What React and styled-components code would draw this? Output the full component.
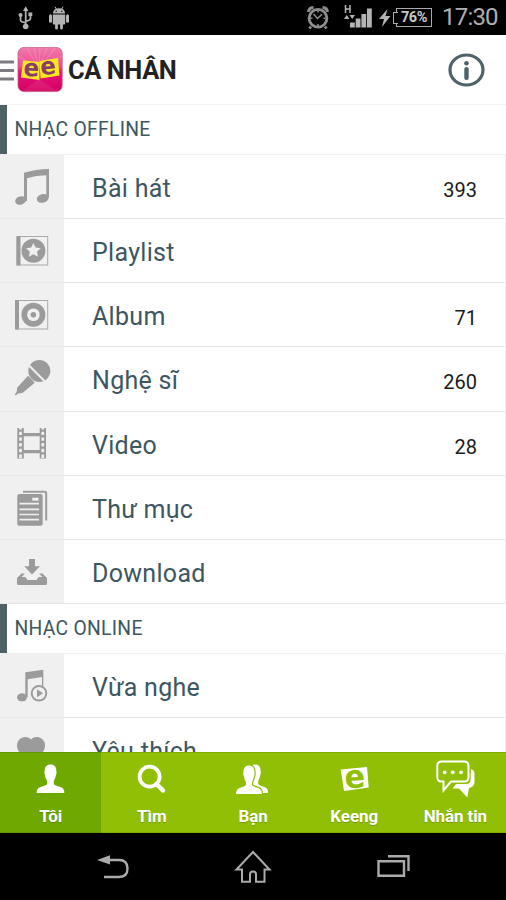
import React from "react";
import styled, { createGlobalStyle } from "styled-components";

const GlobalStyle = createGlobalStyle`
    * {
        box-sizing: border-box;
    }
    body {
        margin: 0;
        background: #fff;
        font-family: Roboto, "Noto Sans", sans-serif;
    }
    svg {
        display: block;
        flex: none;
    }
`;

const Screen = styled.div`
    display: flex;
    flex-direction: column;
    width: 506px;
    height: 900px;
    overflow: hidden;
    background: #fff;
`;

const StatusBar = styled.div`
    flex: none;
    display: flex;
    justify-content: space-between;
    height: 35px;
    padding: 0 8px 0 17px;
    background: #000;
    color: #b4b4b4;
`;

const StatusGroup = styled.div`
    display: flex;
    align-items: center;
    height: 35px;
`;

const Battery = styled.div`
    position: relative;
    width: 36px;
    height: 19px;
    margin-left: 5px;
    border: 1.5px solid #aaa;
    font-size: 14.5px;
    font-weight: 700;
    line-height: 18px;
    text-align: center;
    letter-spacing: -0.4px;
    color: #c8c8c8;
    &::before {
        content: "";
        position: absolute;
        left: -4px;
        top: 3px;
        width: 4px;
        height: 10px;
        border: 1px solid #aaa;
        border-right: 0;
        background: #000;
    }
`;

const Clock = styled.span`
    width: 56px;
    margin-left: 10px;
    font-size: 24px;
    line-height: 37px;
    letter-spacing: -0.8px;
    white-space: nowrap;
    color: #b0b0b0;
`;

const Header = styled.header`
    flex: none;
    display: flex;
    align-items: center;
    height: 70px;
    padding-right: 20px;
    border-bottom: 1px solid #f3f3f3;
`;

const Title = styled.h1`
    flex: 1;
    margin: 0 0 0 5px;
    font-size: 25.5px;
    font-weight: 700;
    line-height: 70px;
    letter-spacing: -0.45px;
    color: #222;
`;

const Content = styled.main`
    flex: 1;
    min-height: 0;
    overflow: hidden;
`;

const SectionTitle = styled.h2`
    height: ${(props) => props.$height}px;
    margin: 0;
    padding-left: 7.5px;
    border-left: 7px solid #4d6167;
    font-size: 19.3px;
    font-weight: 400;
    line-height: 50px;
    letter-spacing: 0.3px;
    color: #3d565f;
`;

const List = styled.div`
    border-right: 1px solid #ededed;
    border-top: 1px solid #f0f0f0;
`;

const Row = styled.div`
    display: flex;
    height: 64.15px;
    border-bottom: 1px solid #e8e8e8;
`;

const IconCell = styled.div`
    flex: none;
    width: 64px;
    background: #f0f0f0;
    overflow: hidden;
    color: #9b9b9b;
`;

const Label = styled.span`
    flex: 1;
    padding-left: 28px;
    font-size: 25px;
    line-height: 68px;
    letter-spacing: 0.3px;
    color: #3d565f;
`;

const Count = styled.span`
    padding-right: 28px;
    font-size: 20px;
    line-height: 70px;
    color: #1a1a1a;
`;

const TabBar = styled.nav`
    flex: none;
    display: grid;
    grid-template-columns: repeat(5, 1fr);
    height: 81px;
    background: #91bf06;
`;

const Tab = styled.div`
    display: flex;
    flex-direction: column;
    align-items: center;
    border-top: 1px solid ${(props) => (props.$active ? "#5f9700" : "#82ad05")};
    border-bottom: 1px solid ${(props) => (props.$active ? "#5f9700" : "#82ad05")};
    background: ${(props) => (props.$active ? "#6fa800" : "#91bf06")};
    color: #fff;
`;

const TabLabel = styled.span`
    font-size: 17px;
    font-weight: 700;
    line-height: 20px;
    letter-spacing: -0.1px;
    text-shadow: 0 1px 1px rgba(0, 0, 0, 0.2);
    white-space: nowrap;
`;

const NavBar = styled.nav`
    flex: none;
    display: flex;
    justify-content: center;
    height: 67px;
    background: #000;
    color: #ababab;
`;

const Icon = ({ w = 64, h = 64, children }) => (
    <svg width={w} height={h} viewBox={`0 0 ${w} ${h}`} fill="currentColor">
        {children}
    </svg>
);

const NoteIcon = () => (
    <Icon>
        <path d="M24 17.8Q36 14 49 14V42.500H46.300V20.300Q36 20.300 27 23.300V46H24Z" />
        <ellipse cx="20.600" cy="45.500" rx="5.500" ry="4.200" transform="rotate(-15 20.600 45.500)" />
        <ellipse cx="42.700" cy="43.400" rx="6" ry="4.300" transform="rotate(-15 42.700 43.400)" />
    </Icon>
);

const Cover = ({ x = 16.5, children }) => (
    <Icon>
        <rect x={x} y="17.500" width={47.7 - x} height="28.500" fill="none" stroke="#aaa" />
        <rect x={x - 0.5} y="17" width="4" height="29.500" rx="1" />
        <circle cx="33.400" cy="31.700" r="12" />
        {children}
    </Icon>
);

const PlaylistIcon = () => (
    <Cover x={17}>
        <path
            fill="#f0f0f0"
            d="M33.400 24L35.600 28.600 40.700 29.200 37 32.700 37.900 37.700 33.400 35.300 28.900 37.700 29.800 32.700 26.100 29.200 31.200 28.600Z"
        />
    </Cover>
);

const AlbumIcon = () => (
    <Cover x={15.5}>
        <circle cx="33.400" cy="31.700" r="6.300" fill="#f0f0f0" />
        <circle cx="33.400" cy="31.700" r="2.800" />
    </Cover>
);

const MicIcon = () => (
    <Icon>
        <circle cx="39.300" cy="24" r="11" />
        <path d="M28 28.700L34.700 35.700 22.500 46 18 46.500 15.800 48.500 14.800 47.500 16.700 44.700 17.300 40.500Z" />
        <path d="M28.500 18L45 34.500" stroke="#f0f0f0" strokeWidth="2" />
    </Icon>
);

const FilmIcon = () => (
    <Icon>
        <path d="M17.300 16H23.800V46.500H17.300ZM39.700 16H46V46.500H39.700Z" />
        <path d="M23 21H40V24.300H23ZM23 38H40V41.300H23Z" />
        {[20.5, 42.8].map((x) => (
            <path key={x} d={`M${x} 15V48`} stroke="#f0f0f0" strokeWidth="2.700" strokeDasharray="3.400 2.300" strokeDashoffset="1" />
        ))}
    </Icon>
);

const FolderIcon = () => (
    <Icon>
        <path d="M23 15.700H44.500Q46.200 15.700 46.200 17.500V44.500" fill="none" stroke="currentColor" strokeWidth="2" />
        <rect x="17.300" y="18" width="25.400" height="31.700" rx="2" />
        <path
            d="M19.500 27.700H39M19.500 33.300H39M19.500 38.500H39M19.500 43.700H39"
            stroke="#f0f0f0"
            strokeWidth="1.700"
        />
        <path d="M32.300 21.700H38.500V24.700H32.300Z" fill="#f0f0f0" />
    </Icon>
);

const DownloadIcon = () => (
    <Icon>
        <path d="M29 19H35V26.300H40L32 34.500 24.300 26.300H29Z" />
        <path d="M21.500 33.500H25L21.500 37H25.500L27.500 40H36.500L38.500 37H42.500L39 33.500H42.500L47 38V43.500Q47 45 45.500 45H18.500Q17 45 17 43.500V38Z" />
    </Icon>
);

const RecentIcon = () => (
    <Icon>
        <path d="M25.300 18.300L43.300 15.700V32H42V23L27.700 25.300V43H25.300Z" />
        <ellipse cx="22" cy="43.300" rx="5" ry="4" />
        <circle cx="39" cy="39.300" r="7.300" fill="#f0f0f0" stroke="currentColor" strokeWidth="2" />
        <path d="M37 35.300L43 39.300 37 43.300Z" />
    </Icon>
);

const HeartIcon = () => (
    <Icon>
        <path d="M31 21.500C34 18.500 38 18.500 41 20.200C45 22.500 46.200 27.500 44 32C41 38 35 43 31 46C27 43 21 38 18 32C16 27.500 17 22.500 21 20.200C24 18.500 28 18.500 31 21.500Z" />
    </Icon>
);

const UsbIcon = () => (
    <svg width="17" height="24" viewBox="0 0 17 24" fill="currentColor">
        <path d="M8.700 3V20M3.500 10V14Q3.500 15 4.500 15.500L8.700 17M13.500 9V12Q13.500 13.500 12.500 14L8.700 15.500" fill="none" stroke="currentColor" strokeWidth="1.700" />
        <path d="M8.700 .2L11.500 5H6ZM11.500 6.500H15.300V10H11.500Z" />
        <circle cx="3.500" cy="9" r="2" />
        <circle cx="8.700" cy="20.500" r="2.800" />
    </svg>
);

const AndroidIcon = () => (
    <svg width="20" height="24" viewBox="0 0 20 24" fill="currentColor">
        <path d="M3.800 7.500Q4.300 2.200 10 2.200T16.200 7.500Z" />
        <path d="M6 .7L7.500 3.500M14 .7L12.500 3.500" stroke="currentColor" strokeWidth="1" />
        <rect x="0" y="8.300" width="3" height="8.500" rx="1.500" />
        <rect x="17" y="8.300" width="3" height="8.500" rx="1.500" />
        <path d="M3.800 8.400H16.200V17.500Q16.200 18.500 15.200 18.500H13.900V22.200Q13.900 23.500 12.500 23.500T11.100 22.200V18.500H8.900V22.200Q8.900 23.500 7.500 23.500T6.100 22.200V18.500H4.800Q3.800 18.500 3.800 17.500Z" />
        <circle cx="7.200" cy="5.300" r=".7" fill="#000" />
        <circle cx="12.800" cy="5.300" r=".7" fill="#000" />
    </svg>
);

const AlarmIcon = () => (
    <svg width="22" height="24" viewBox="0 0 22 24" fill="none" stroke="#8e8e8e">
        <circle cx="11" cy="12.200" r="8.900" strokeWidth="2.800" />
        <path d="M1.500 6Q1.500 2 6.500 1.500M15.500 1.500Q20.500 2 20.500 6M4 20.500L2.500 22.500M18 20.500L19.500 22.500" strokeWidth="2.800" />
        <path d="M11 4.500V6.500M11 18V20M3.500 12.200H5.500M16.500 12.200H18.500M6.500 8L10.500 12.500 15 8.300" strokeWidth="1.500" />
    </svg>
);

const SignalIcon = () => (
    <svg width="29" height="25" viewBox="0 -1 29 25" fill="currentColor">
        <path d="M1.500 -1V7M6 -1V7M1.500 3H6" stroke="currentColor" strokeWidth="1.500" />
        <path d="M0 13L2.700 9 5.400 13ZM5.500 9H11L8.200 13Z" />
        <path d="M6 16.500H10.800V21.500H6ZM11.700 12.500H16.500V21.500H11.700ZM17.400 8H22.200V21.500H17.400ZM23 2.500H27.800V21.500H23Z" />
    </svg>
);

const BoltIcon = () => (
    <svg width="12" height="18" viewBox="0 0 12 18" fill="currentColor">
        <path d="M8.500 0L0 10H5L3 18 11.500 7H6.500Z" />
    </svg>
);

const MenuIcon = () => (
    <svg width="17" height="24" viewBox="0 0 17 24">
        <path d="M0 4H14M0 12.500H14M0 21H14" stroke="#7c7c80" strokeWidth="3" />
    </svg>
);

const AppLogo = () => (
    <svg width="46" height="46" viewBox="0 0 46 46">
        <defs>
            <linearGradient id="logo" x2="0" y2="1">
                <stop offset="0" stopColor="#f17aa9" />
                <stop offset=".45" stopColor="#ec4b90" />
                <stop offset=".55" stopColor="#e5127a" />
                <stop offset="1" stopColor="#d5005f" />
            </linearGradient>
        </defs>
        <rect x="1" y=".4" width="44.200" height="44.200" rx="6" fill="url(#logo)" stroke="#c95a86" strokeWidth=".8" />
        <path
            d="M22 22L10 1M22 22L17 1M22 22L23 1M22 22L30 1M22 22L38 1M22 22L1 9M22 22L45 9"
            stroke="#fff"
            strokeOpacity=".13"
            strokeWidth="1.500"
        />
        <path d="M22 32L5 44H40Z" fill="#fff" fillOpacity=".08" />
        <path d="M6 13.500L22.500 15 22.500 33 4 30.500Z" fill="#f8e62a" />
        <path d="M22.500 14L41 11 42.500 28.500 23.500 31.500Z" fill="#fbe91c" />
        <g fill="#8a3d68" fontFamily="DejaVu Sans" fontWeight="700" fontSize="24">
            <text x="6.500" y="29" textLength="15.500" lengthAdjust="spacingAndGlyphs" transform="rotate(3 13 24)">e</text>
            <text x="23.500" y="27.300" textLength="15.500" lengthAdjust="spacingAndGlyphs" transform="rotate(-5 31 22)">e</text>
        </g>
    </svg>
);

const InfoIcon = () => (
    <svg width="38" height="36" viewBox="0 0 38 36">
        <ellipse cx="18.500" cy="18" rx="16.500" ry="15" fill="none" stroke="#4d6269" strokeWidth="3.200" />
        <circle cx="18.500" cy="11.300" r="2.300" fill="#4d6269" />
        <rect x="16.300" y="15" width="4.400" height="13" rx="2" fill="#4d6269" />
    </svg>
);

const PERSON =
    "M50.500 11.500C54.500 11.500 56.500 14 56.300 18C56.500 19 57 20 56 22C55.500 24.500 54.500 26.500 53.800 28V31C55 33 61 33.500 63 35.500C64.300 37 64.300 38.500 64.300 40H36.700C36.700 38.500 36.700 37 38 35.500C40 33.500 46 33 47.200 31V28C46.300 26.500 45.200 24.500 45 22C44 20 44.300 19 44.700 18C44.500 14 46.500 11.500 50.500 11.500Z";

const PersonIcon = () => (
    <Icon w={101} h={53}>
        <path d={PERSON} />
    </Icon>
);

const SearchIcon = () => (
    <Icon w={101} h={53}>
        <circle cx="48.600" cy="23.700" r="10" fill="none" stroke="currentColor" strokeWidth="3.800" />
        <path d="M55.500 31L62 37.500" stroke="currentColor" strokeWidth="4.500" strokeLinecap="round" />
    </Icon>
);

const FriendsIcon = () => (
    <Icon w={101} h={53}>
        <path d={PERSON} transform="translate(6.200 0) scale(.93 1)" />
        <path d={PERSON} transform="translate(0 1) scale(.93 1)" stroke="#91bf06" strokeWidth="2.600" />
        <path d={PERSON} transform="translate(0 1) scale(.93 1)" />
    </Icon>
);

const KeengIcon = () => (
    <Icon w={101} h={53}>
        <path d="M36.700 16.500L63 14 64.700 34.500 40 38Z" />
        <text
            x="40.500"
            y="34.800"
            textLength="20.500"
            lengthAdjust="spacingAndGlyphs"
            transform="rotate(-4 50 26)"
            fill="#91bf06"
            fontFamily="DejaVu Sans"
            fontWeight="700"
            fontSize="32"
        >
            e
        </text>
    </Icon>
);

const ChatIcon = () => (
    <Icon w={101} h={53}>
        <path d="M66 16Q69.500 17 69.500 21V29Q69.500 34 64 35L62.300 44.500 54 35.500H47.500L51 31H61Q65.500 31 65.500 27Z" />
        <path
            d="M36.500 8.500H59.500Q63.500 8.500 63.500 13V24Q63.500 28.500 59.500 28.500H46L38.500 37.500V28.500H36.500Q32.300 28.500 32.300 24V13Q32.300 8.500 36.500 8.500Z"
            fill="#91bf06"
            stroke="currentColor"
            strokeWidth="2"
        />
        <circle cx="39.700" cy="19.300" r="1.900" />
        <circle cx="47.800" cy="19.300" r="1.900" />
        <circle cx="56" cy="19.300" r="1.900" />
    </Icon>
);

const BackIcon = () => (
    <Icon w={140} h={67}>
        <path d="M54 27L67 22.300V31.500Z" />
        <path d="M66 27H76Q84.500 27 84.500 35.500T76 44H61" fill="none" stroke="currentColor" strokeWidth="2.400" />
    </Icon>
);

const HomeIcon = () => (
    <Icon w={140} h={67}>
        <path
            d="M70 19L53.500 36.500H59V48.700H67V41.500Q67 38.500 70 38.500T73 41.500V48.700H81.500V36.500H86.500Z"
            fill="none"
            stroke="currentColor"
            strokeWidth="2"
        />
    </Icon>
);

const WindowsIcon = () => (
    <Icon w={140} h={67}>
        <path d="M55.500 28.300H81V42.700H55.500ZM65 23.300H85.500V38" fill="none" stroke="currentColor" strokeWidth="2.400" />
    </Icon>
);

const offline = [
    { label: "Bài hát", icon: NoteIcon, count: 393 },
    { label: "Playlist", icon: PlaylistIcon },
    { label: "Album", icon: AlbumIcon, count: 71 },
    { label: "Nghệ sĩ", icon: MicIcon, count: 260 },
    { label: "Video", icon: FilmIcon, count: 28 },
    { label: "Thư mục", icon: FolderIcon },
    { label: "Download", icon: DownloadIcon },
];

const online = [
    { label: "Vừa nghe", icon: RecentIcon },
    { label: "Yêu thích", icon: HeartIcon },
];

const tabs = [
    { label: "Tôi", icon: PersonIcon, active: true },
    { label: "Tìm", icon: SearchIcon },
    { label: "Bạn", icon: FriendsIcon },
    { label: "Keeng", icon: KeengIcon },
    { label: "Nhắn tin", icon: ChatIcon },
];

const MusicList = ({ items }) => (
    <List>
        {items.map(({ label, icon: ItemIcon, count }) => (
            <Row key={label}>
                <IconCell>
                    <ItemIcon />
                </IconCell>
                <Label>{label}</Label>
                {count && <Count>{count}</Count>}
            </Row>
        ))}
    </List>
);

const LeftStatus = styled(StatusGroup)`
    gap: 15px;
`;

const RightStatus = styled(StatusGroup)`
    svg:nth-child(2) {
        margin: 0 6px 0 15px;
    }
`;

const App = () => (
    <Screen>
        <GlobalStyle />
        <StatusBar>
            <LeftStatus>
                <UsbIcon />
                <AndroidIcon />
            </LeftStatus>
            <RightStatus>
                <AlarmIcon />
                <SignalIcon />
                <BoltIcon />
                <Battery>76%</Battery>
                <Clock>17:30</Clock>
            </RightStatus>
        </StatusBar>
        <Header>
            <MenuIcon />
            <AppLogo />
            <Title>CÁ NHÂN</Title>
            <InfoIcon />
        </Header>
        <Content>
            <SectionTitle $height={49}>NHẠC OFFLINE</SectionTitle>
            <MusicList items={offline} />
            <SectionTitle $height={49}>NHẠC ONLINE</SectionTitle>
            <MusicList items={online} />
        </Content>
        <TabBar>
            {tabs.map(({ label, icon: TabIcon, active }) => (
                <Tab key={label} $active={active}>
                    <TabIcon />
                    <TabLabel>{label}</TabLabel>
                </Tab>
            ))}
        </TabBar>
        <NavBar>
            <BackIcon />
            <HomeIcon />
            <WindowsIcon />
        </NavBar>
    </Screen>
);

export default App;
